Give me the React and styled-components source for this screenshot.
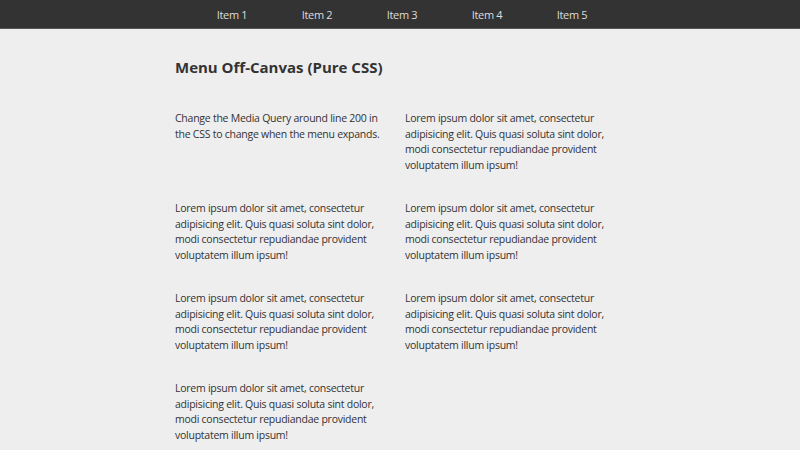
import React from 'react';
import styled, { createGlobalStyle } from 'styled-components';

const GlobalStyle = createGlobalStyle`
    html, body {
        margin: 0;
        padding: 0;
        background: #eeeeee;
        font-family: 'Open Sans', 'DejaVu Sans', sans-serif;
        color: #333;
    }
`;

const NAV_BAR = styled.nav`
    height: 28px;
    background: #333333;
    border-bottom: 1px solid #555;
    display: flex;
    justify-content: center;
    align-items: center;
    padding-left: 4px;
`;

const NAV_LIST = styled.ul`
    list-style: none;
    margin: 0;
    padding: 0;
    display: flex;
`;

const NAV_ITEM = styled.li`
    width: 85px;
    text-align: center;
    font-size: 11px;
    letter-spacing: -0.3px;
    color: #dddddd;
`;

const MAIN = styled.main`
    width: 450px;
    margin: 0 auto;
    padding-top: 27px;
`;

const TITLE = styled.h1`
    font-size: 15px;
    font-weight: 700;
    margin: 0 0 33px;
    line-height: 22px;
`;

const GRID = styled.div`
    display: grid;
    grid-template-columns: 230px 220px;
    row-gap: 28px;
`;

const PARAGRAPH = styled.p`
    margin: 0;
    font-size: 10.5px;
    letter-spacing: -0.25px;
    line-height: 15.5px;
    padding-right: 12px;
`;

const lorem = 'Lorem ipsum dolor sit amet, consectetur adipisicing elit. Quis quasi soluta sint dolor, modi consectetur repudiandae provident voluptatem illum ipsum!';

const items = ['Item 1', 'Item 2', 'Item 3', 'Item 4', 'Item 5'];

const App = () => {
    const paragraphs = [
        'Change the Media Query around line 200 in the CSS to change when the menu expands.',
        lorem, lorem, lorem, lorem, lorem, lorem
    ];

    return (
        <div>
            <GlobalStyle />
            <NAV_BAR>
                <NAV_LIST>
                    {items.map(item => <NAV_ITEM key={item}>{item}</NAV_ITEM>)}
                </NAV_LIST>
            </NAV_BAR>

            <MAIN>
                <TITLE>Menu Off-Canvas (Pure CSS)</TITLE>
                <GRID>
                    {paragraphs.map((text, i) => (
                        <PARAGRAPH key={i}>{text}</PARAGRAPH>
                    ))}
                </GRID>
            </MAIN>
        </div>
    );
};

export default App;
